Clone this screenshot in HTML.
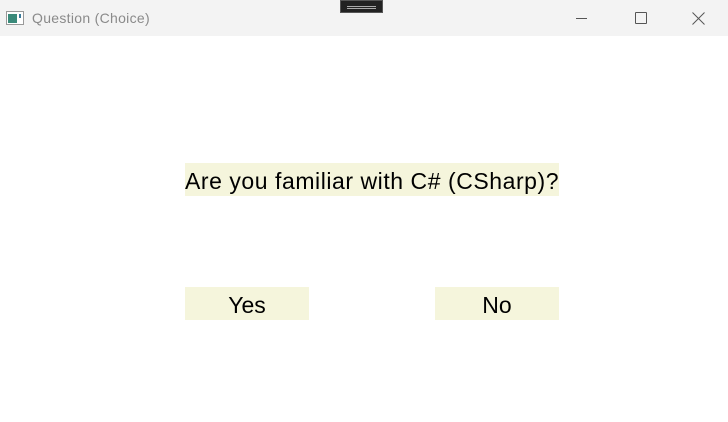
<!DOCTYPE html>
<html><head><style>
body{margin:0;width:728px;height:422px;background:#fff;font-family:"Liberation Sans",sans-serif;position:relative;overflow:hidden}
.tb{position:absolute;left:0;top:0;width:728px;height:36px;background:#f3f3f3}
.t{position:absolute;left:32px;top:10px;font-size:14px;color:#8a8a8a;letter-spacing:0.3px}
.box{position:absolute;background:#f5f5dc;color:#000;font-size:23px;text-align:center}
</style></head><body>
<div class="tb">
<svg style="position:absolute;left:6px;top:11px" width="18" height="14"><rect x="0.5" y="0.5" width="17" height="13" fill="#fff" stroke="#999"/><rect x="2" y="3" width="9" height="9" fill="#3a8a7a"/><rect x="13" y="3" width="2" height="4" fill="#3a7a9a"/></svg>
<div class="t">Question (Choice)</div>
<div style="position:absolute;left:340px;top:0;width:43px;height:13px;background:#222;border:1px solid #555;box-sizing:border-box"><div style="margin:5px 6px 0;height:1px;background:#aaa"></div><div style="margin:1px 6px 0;height:1px;background:#aaa"></div></div>
<div style="position:absolute;left:576px;top:18px;width:11px;height:1px;background:#555"></div>
<div style="position:absolute;left:635px;top:12px;width:10px;height:10px;border:1px solid #555;border-radius:1px"></div>
<svg style="position:absolute;left:692px;top:12px" width="13" height="13"><path d="M0.5 0.5L12.5 12.5M12.5 0.5L0.5 12.5" stroke="#555" stroke-width="1"/></svg>
</div>
<div class="box" style="left:185px;top:163px;width:374px;height:33px;line-height:36px;text-align:left;letter-spacing:0.55px;white-space:nowrap">Are you familiar with C# (CSharp)?</div>
<div class="box" style="left:185px;top:287px;width:124px;height:33px;line-height:36px">Yes</div>
<div class="box" style="left:435px;top:287px;width:124px;height:33px;line-height:36px">No</div>
</body></html>
